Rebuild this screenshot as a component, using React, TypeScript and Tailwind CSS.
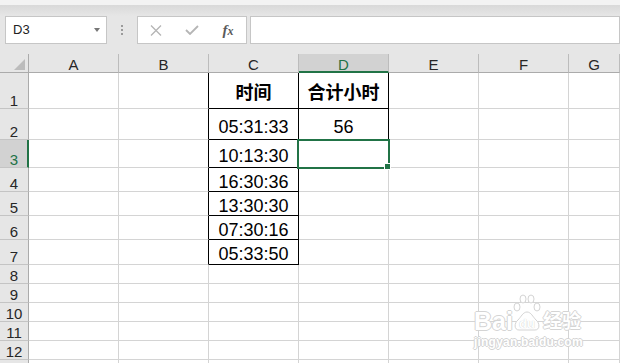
import React from "react";

const cols = ["A", "B", "C", "D", "E", "F", "G"];
const rows = [1, 2, 3, 4, 5, 6, 7, 8, 9, 10, 11, 12, 13];

const data: Record<string, string> = {
  C1: "时间",
  D1: "合计小时",
  C2: "05:31:33",
  D2: "56",
  C3: "10:13:30",
  C4: "16:30:36",
  C5: "13:30:30",
  C6: "07:30:16",
  C7: "05:33:50",
};

// cells sit on the bottom like excel does, a few rows need a nudge
const rowPad: Record<number, string> = {
  1: "pb-[6px]",
  2: "pb-[3px]",
  3: "pb-[2px]",
  7: "pb-[1px]",
};

function cellBorders(col: string, r: number) {
  const right =
    ((col === "B" || col === "C") && r <= 7) || (col === "D" && r <= 2)
      ? "border-r-black"
      : "border-r-[#d4d4d4]";
  const bottom =
    (col === "C" && r <= 7) || (col === "D" && r <= 2)
      ? "border-b-black"
      : "border-b-[#d4d4d4]";
  return right + " " + bottom;
}

function NameBox() {
  return (
    <div className="ml-[5px] w-[102px] border border-[#c6c6c6] bg-white flex items-center justify-between pl-[7px] pr-[6px] text-[13px] text-[#222]">
      <span>D3</span>
      <span className="w-0 h-0 border-l-[3px] border-r-[3px] border-t-[4px] border-l-transparent border-r-transparent border-t-[#777]" />
    </div>
  );
}

function FormulaButtons() {
  return (
    <div className="w-[110px] border border-[#c6c6c6] bg-white flex items-center">
      <div className="w-[36px] flex justify-center">
        <svg width="12" height="11" viewBox="0 0 12 11">
          <path d="M1 0.5 L11 10.5 M11 0.5 L1 10.5" stroke="#b5b5b5" strokeWidth="1.3" fill="none" />
        </svg>
      </div>
      <div className="w-[36px] flex justify-center">
        <svg width="14" height="10" viewBox="0 0 14 10">
          <path d="M1 5 L5 9 L13 1" stroke="#b5b5b5" strokeWidth="1.8" fill="none" />
        </svg>
      </div>
      <div className="w-[36px] flex justify-center">
        <span className="font-['Liberation_Serif',serif] italic font-bold text-[15px] leading-none text-[#5a5a5a]">
          f<span className="text-[12px]">x</span>
        </span>
      </div>
    </div>
  );
}

function Watermark() {
  const outline =
    "text-white [text-shadow:1px_0_0_#d4d4d4,-1px_0_0_#d4d4d4,0_1px_0_#d4d4d4,0_-1px_0_#d4d4d4]";
  return (
    <div className="absolute left-[474px] top-[294px] w-[114px] z-20 pointer-events-none font-['Liberation_Sans','Noto_Sans_CJK_SC',sans-serif]">
      <div className="flex items-end">
        <span className={"text-[25px] leading-[22px] font-bold " + outline}>Bai</span>
        <div className="relative w-[28px] h-[38px] flex items-end justify-center">
          <svg className="absolute left-0 top-0" width="28" height="38" viewBox="0 0 28 38">
            <g fill="#fff" stroke="#d4d4d4" strokeWidth="1">
              <ellipse cx="4" cy="13" rx="3" ry="4" />
              <ellipse cx="10" cy="5" rx="3" ry="4" />
              <ellipse cx="18" cy="5" rx="3" ry="4" />
              <ellipse cx="24" cy="13" rx="3" ry="4" />
              <path d="M6 36 C1 36 1 29 5 26 C8 23 10 18 14 18 C18 18 20 23 23 26 C27 29 27 36 22 36 Z" />
            </g>
          </svg>
          <span className="relative text-[13px] leading-[14px] font-bold text-white [text-shadow:0_0_1px_#bbb] pb-[1px]">du</span>
        </div>
        <span className={"text-[19px] leading-[21px] font-bold ml-[2px] " + outline}>经验</span>
      </div>
      <div className={"text-[12px] leading-[14px] font-bold mt-[3px] tracking-[0.2px] " + outline}>
        jingyan.baidu.com
      </div>
    </div>
  );
}

export default function App() {
  return (
    <div className="relative w-[620px] h-[363px] overflow-hidden bg-white font-['Liberation_Sans','Noto_Sans_CJK_SC',sans-serif]">
      {/* ribbon edge + formula bar */}
      <div className="h-[54px] bg-[#e6e6e6] flex flex-col">
        <div className="h-[5px] bg-[#f3f3f3]" />
        <div className="h-[11px] bg-linear-to-b from-[#d9d9d9] to-[#e6e6e6]" />
        <div className="h-[28px] flex">
          <NameBox />
          <div className="w-[30px] flex flex-col items-center justify-center gap-[2px]">
            <span className="w-[2px] h-[2px] bg-[#9a9a9a]" />
            <span className="w-[2px] h-[2px] bg-[#9a9a9a]" />
            <span className="w-[2px] h-[2px] bg-[#9a9a9a]" />
          </div>
          <FormulaButtons />
          <div className="ml-[3px] flex-1 border border-[#c6c6c6] bg-white" />
        </div>
      </div>

      {/* sheet */}
      <div className="grid grid-cols-[29px_repeat(6,90px)_1fr] grid-rows-[19px_36px_31px_28px_24px_24px_24px_25px_19px_19px_19px_19px_19px_19px]">
        <div className="bg-[#e6e6e6] border-r border-b border-r-[#ababab] border-b-[#ababab] flex items-end justify-end pr-[3px] pb-[2px]">
          <svg width="11" height="11" viewBox="0 0 11 11">
            <path d="M11 0 L11 11 L0 11 Z" fill="#bcbcbc" />
          </svg>
        </div>
        {cols.map((c) => (
          <div
            key={c}
            className={
              c === "D"
                ? "bg-[#d2d2d2] border-r border-b-2 border-r-[#bcbcbc] border-b-[#217346] flex items-end justify-center text-[15px] leading-[13px] text-[#217346]"
                : "bg-[#e6e6e6] border-r border-b border-r-[#bcbcbc] border-b-[#ababab] flex items-end justify-center text-[15px] leading-[13px] text-[#262626] pb-[1px]"
            }
          >
            {c}
          </div>
        ))}

        {rows.map((r) => (
          <React.Fragment key={r}>
            <div
              className={
                r === 3
                  ? "bg-[#d2d2d2] border-r-2 border-b border-r-[#217346] border-b-[#c4c4c4] flex items-end justify-center text-[15px] leading-[13px] text-[#217346] pb-[1px] pl-[1px]"
                  : "bg-[#e6e6e6] border-r border-b border-r-[#ababab] border-b-[#c4c4c4] flex items-end justify-center text-[15px] leading-[13px] text-[#262626] pb-[1px]"
              }
            >
              {/* row 13 only peeks in at the bottom edge, its label is out of view */}
              {r < 13 ? r : null}
            </div>
            {cols.map((c) => {
              const key = c + r;
              const text = data[key];
              return (
                <div
                  key={key}
                  className={
                    "relative bg-white border-r border-b flex items-end justify-center text-[18px] leading-[18px] text-black " +
                    cellBorders(c, r) +
                    " " +
                    (rowPad[r] || "") +
                    (r === 1 ? " font-bold" : "")
                  }
                >
                  {text}
                  {key === "D3" && (
                    <div className="absolute -left-[2px] -top-[1px] w-[93px] h-[30px] border-2 border-[#217346] z-10 pointer-events-none">
                      <div className="absolute -right-[3px] -bottom-[3px] w-[7px] h-[7px] bg-[#217346] border border-white" />
                    </div>
                  )}
                </div>
              );
            })}
          </React.Fragment>
        ))}
      </div>

      <Watermark />
    </div>
  );
}
